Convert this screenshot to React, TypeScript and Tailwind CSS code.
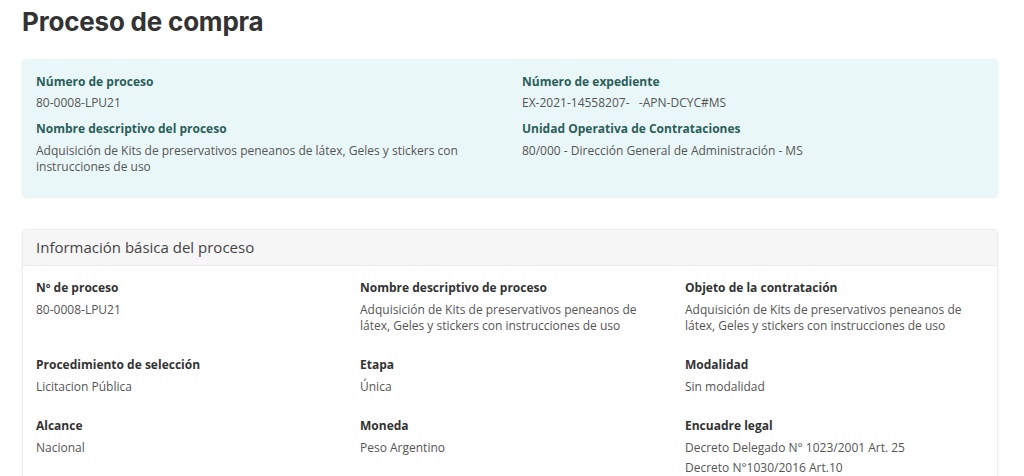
import React from "react";

const body = { fontFamily: '"Open Sans", "Liberation Sans", sans-serif' };

function TealField({ label, children, gap = 5 }: { label: string; children: React.ReactNode; gap?: number }) {
  return (
    <div>
      <div className="text-[12px] leading-[16px] font-bold text-[#2b5e5a]">{label}</div>
      <div className={(gap === 6 ? "mt-[6px]" : "mt-[5px]") + " text-[12px] leading-[16px] text-[#555555]"}>{children}</div>
    </div>
  );
}

function Field({ label, children }: { label: string; children: React.ReactNode }) {
  return (
    <div className="pr-[18px]">
      <div className="text-[12px] leading-[16px] font-bold text-[#333333]">{label}</div>
      <div className="mt-[6px] text-[12px] leading-[16px] text-[#555555]">{children}</div>
    </div>
  );
}

export default function App() {
  return (
    <div className="min-h-[476px] bg-white pl-[22px] pr-[26px] pt-[6px]" style={body}>
      <h1
        className="text-[26px] leading-[32px] font-bold text-[#333333] tracking-[-0.2px]"
        style={{ fontFamily: 'Inter, "Liberation Sans", sans-serif' }}
      >
        Proceso de compra
      </h1>

      <div className="mt-[21px] rounded-[4px] bg-[#eaf7f8] shadow-[0_1px_3px_rgba(0,0,0,0.08)] grid grid-cols-2 pt-[15px] pb-[22px]">
        <div className="pl-[14px] pr-[20px] flex flex-col gap-[10px]">
          <TealField label="Número de proceso">80-0008-LPU21</TealField>
          <TealField label="Nombre descriptivo del proceso" gap={6}>
            Adquisición de Kits de preservativos peneanos de látex, Geles y stickers con instrucciones de uso
          </TealField>
        </div>
        <div className="pl-[12px] pr-[20px] flex flex-col gap-[10px]">
          <TealField label="Número de expediente">
            <span className="whitespace-pre">EX-2021-14558207-   -APN-DCYC#MS</span>
          </TealField>
          <TealField label="Unidad Operativa de Contrataciones" gap={6}>
            80/000 - Dirección General de Administración - MS
          </TealField>
        </div>
      </div>

      <div className="mt-[32px] rounded-t-[4px] border border-[#ececec] shadow-[0_1px_3px_rgba(0,0,0,0.06)] bg-white">
        <div className="h-[36px] bg-[#f6f6f6] border-b border-[#ececec] px-[13px] flex items-center">
          <span className="text-[15px] text-[#444444]">Información básica del proceso</span>
        </div>
        <div className="px-[13px] pt-[14px] pb-[20px] grid grid-cols-[324px_325px_1fr] gap-y-[23px]">
          <Field label="Nº de proceso">80-0008-LPU21</Field>
          <Field label="Nombre descriptivo de proceso">
            Adquisición de Kits de preservativos peneanos de látex, Geles y stickers con instrucciones de uso
          </Field>
          <Field label="Objeto de la contratación">
            Adquisición de Kits de preservativos peneanos de látex, Geles y stickers con instrucciones de uso
          </Field>

          <Field label="Procedimiento de selección">Licitacion Pública</Field>
          <Field label="Etapa">Única</Field>
          <Field label="Modalidad">Sin modalidad</Field>

          <Field label="Alcance">Nacional</Field>
          <Field label="Moneda">Peso Argentino</Field>
          <Field label="Encuadre legal">
            <div>Decreto Delegado N° 1023/2001 Art. 25</div>
            <div className="mt-[4px]">Decreto N°1030/2016 Art.10</div>
          </Field>
        </div>
      </div>
    </div>
  );
}
